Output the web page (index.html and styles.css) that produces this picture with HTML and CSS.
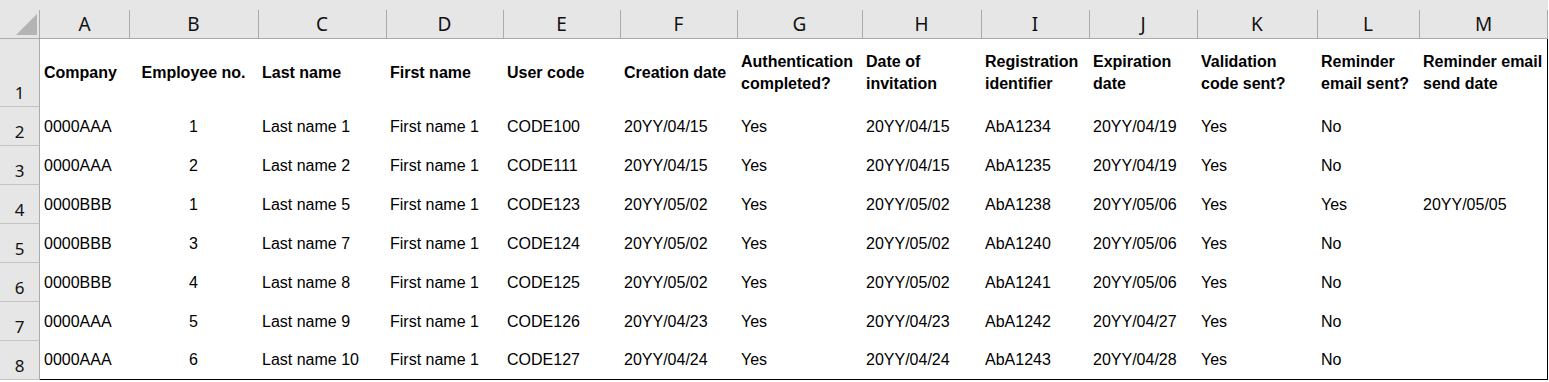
FILE: index.html
```html
<!DOCTYPE html>
<html>
<head>
<meta charset="utf-8">
<title>Sheet</title>
<link rel="stylesheet" href="styles.css">
</head>
<body>
<div class="sheet">
  <div class="row colheads">
    <div class="corner"><svg width="21" height="21" viewBox="0 0 21 21"><polygon points="0,21 21,21 21,0" fill="#b4b4b4"/></svg></div>
    <div class="ch first">A</div><div class="ch">B</div><div class="ch">C</div><div class="ch">D</div><div class="ch">E</div><div class="ch">F</div><div class="ch">G</div><div class="ch">H</div><div class="ch">I</div><div class="ch">J</div><div class="ch">K</div><div class="ch">L</div><div class="ch last">M</div>
  </div>
  <div class="row head">
    <div class="rh">1</div>
    <div class="c">Company</div><div class="c ctr">Employee no.</div><div class="c">Last name</div><div class="c">First name</div><div class="c">User code</div><div class="c">Creation date</div><div class="c">Authentication<br>completed?</div><div class="c">Date of<br>invitation</div><div class="c">Registration<br>identifier</div><div class="c">Expiration<br>date</div><div class="c">Validation<br>code sent?</div><div class="c">Reminder<br>email sent?</div><div class="c end">Reminder email<br>send date</div>
  </div>
  <div class="row">
    <div class="rh">2</div>
    <div class="c">0000AAA</div><div class="c ctr">1</div><div class="c">Last name 1</div><div class="c">First name 1</div><div class="c">CODE100</div><div class="c">20YY/04/15</div><div class="c">Yes</div><div class="c">20YY/04/15</div><div class="c">AbA1234</div><div class="c">20YY/04/19</div><div class="c">Yes</div><div class="c">No</div><div class="c end"></div>
  </div>
  <div class="row">
    <div class="rh">3</div>
    <div class="c">0000AAA</div><div class="c ctr">2</div><div class="c">Last name 2</div><div class="c">First name 1</div><div class="c">CODE111</div><div class="c">20YY/04/15</div><div class="c">Yes</div><div class="c">20YY/04/15</div><div class="c">AbA1235</div><div class="c">20YY/04/19</div><div class="c">Yes</div><div class="c">No</div><div class="c end"></div>
  </div>
  <div class="row">
    <div class="rh">4</div>
    <div class="c">0000BBB</div><div class="c ctr">1</div><div class="c">Last name 5</div><div class="c">First name 1</div><div class="c">CODE123</div><div class="c">20YY/05/02</div><div class="c">Yes</div><div class="c">20YY/05/02</div><div class="c">AbA1238</div><div class="c">20YY/05/06</div><div class="c">Yes</div><div class="c">Yes</div><div class="c end">20YY/05/05</div>
  </div>
  <div class="row">
    <div class="rh">5</div>
    <div class="c">0000BBB</div><div class="c ctr">3</div><div class="c">Last name 7</div><div class="c">First name 1</div><div class="c">CODE124</div><div class="c">20YY/05/02</div><div class="c">Yes</div><div class="c">20YY/05/02</div><div class="c">AbA1240</div><div class="c">20YY/05/06</div><div class="c">Yes</div><div class="c">No</div><div class="c end"></div>
  </div>
  <div class="row">
    <div class="rh">6</div>
    <div class="c">0000BBB</div><div class="c ctr">4</div><div class="c">Last name 8</div><div class="c">First name 1</div><div class="c">CODE125</div><div class="c">20YY/05/02</div><div class="c">Yes</div><div class="c">20YY/05/02</div><div class="c">AbA1241</div><div class="c">20YY/05/06</div><div class="c">Yes</div><div class="c">No</div><div class="c end"></div>
  </div>
  <div class="row">
    <div class="rh">7</div>
    <div class="c">0000AAA</div><div class="c ctr">5</div><div class="c">Last name 9</div><div class="c">First name 1</div><div class="c">CODE126</div><div class="c">20YY/04/23</div><div class="c">Yes</div><div class="c">20YY/04/23</div><div class="c">AbA1242</div><div class="c">20YY/04/27</div><div class="c">Yes</div><div class="c">No</div><div class="c end"></div>
  </div>
  <div class="row lastrow">
    <div class="rh">8</div>
    <div class="c">0000AAA</div><div class="c ctr">6</div><div class="c">Last name 10</div><div class="c">First name 1</div><div class="c">CODE127</div><div class="c">20YY/04/24</div><div class="c">Yes</div><div class="c">20YY/04/24</div><div class="c">AbA1243</div><div class="c">20YY/04/28</div><div class="c">Yes</div><div class="c">No</div><div class="c end"></div>
  </div>
</div>
</body>
</html>
```

FILE: styles.css
```css
* { box-sizing: border-box; }
html, body { margin: 0; padding: 0; background: #fff; }
body { font-family: "Liberation Sans", Arial, sans-serif; font-size: 16px; color: #000; }

.sheet { width: 1548px; }

.row {
  display: grid;
  grid-template-columns: 40px 89px 129px 128px 117px 117px 117px 125px 119px 108px 108px 120px 102px 129px;
  height: 39px;
}
.row.head { height: 68px; font-weight: bold; line-height: 22px; }

.colheads { background: #e6e6e6; border-bottom: 1px solid #ababab; }

.corner {
  display: flex;
  align-items: flex-end;
  justify-content: flex-end;
  padding: 0 3px 3px 0;
  background: linear-gradient(#ababab, #ababab) right 10px / 1px calc(100% - 10px) no-repeat;
}
.corner svg { display: block; }

.ch {
  display: flex;
  align-items: center;
  justify-content: center;
  padding-top: 10px;
  font-family: "Noto Sans", "Open Sans", sans-serif;
  font-size: 19px;
  color: #111;
  background: linear-gradient(#ababab, #ababab) left 10px / 1px calc(100% - 10px) no-repeat;
}
.ch.first { background: none; }
.ch.last {
  background:
    linear-gradient(#ababab, #ababab) left 10px / 1px calc(100% - 10px) no-repeat,
    linear-gradient(#ababab, #ababab) right 10px / 1px calc(100% - 10px) no-repeat;
}

.rh {
  display: flex;
  align-items: flex-end;
  justify-content: center;
  padding-bottom: 5px;
  background: #e6e6e6;
  border-right: 1px solid #ababab;
  border-bottom: 1px solid #c4c4c4;
  font-family: "Noto Sans", "Open Sans", sans-serif;
  font-size: 17px;
  font-weight: normal;
  line-height: 17px;
  color: #111;
}

.c {
  display: flex;
  align-items: center;
  padding-left: 4px;
  white-space: nowrap;
}
.c.ctr { justify-content: center; padding-left: 0; }
.c.end { border-right: 1px solid #000; }
.lastrow .c { border-bottom: 1px solid #000; }
```
